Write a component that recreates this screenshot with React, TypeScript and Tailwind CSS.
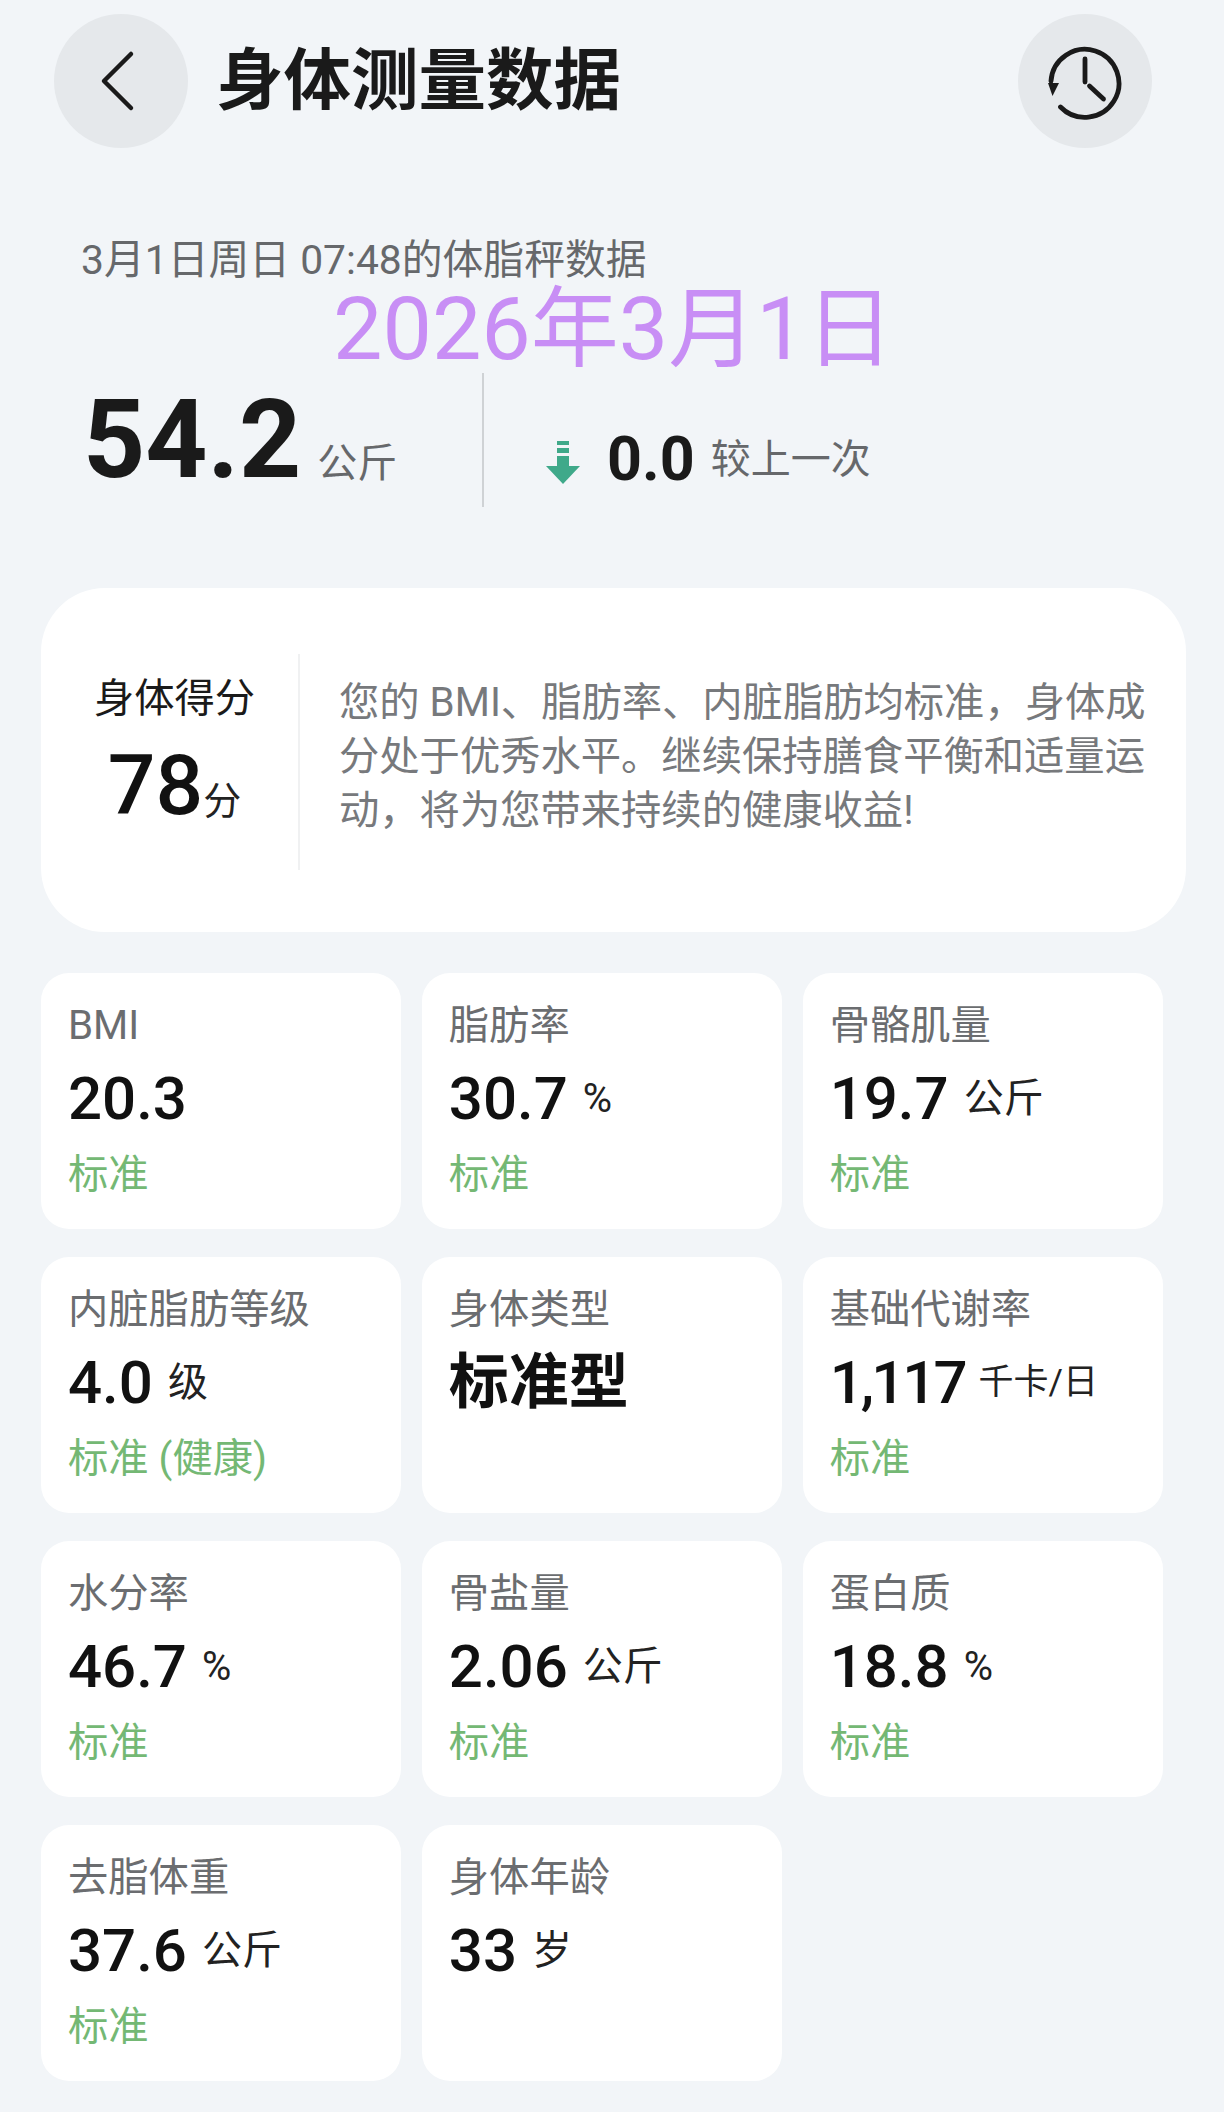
type Metric = {
  label: string;
  value: string;
  unit?: string;
  status?: string;
  big?: boolean;
};

const METRICS: Metric[] = [
  { label: 'BMI', value: '20.3', status: '标准' },
  { label: '脂肪率', value: '30.7', unit: '%', status: '标准' },
  { label: '骨骼肌量', value: '19.7', unit: '公斤', status: '标准' },
  { label: '内脏脂肪等级', value: '4.0', unit: '级', status: '标准 (健康)' },
  { label: '身体类型', value: '标准型', big: true },
  { label: '基础代谢率', value: '1,117', unit: '千卡/日', status: '标准' },
  { label: '水分率', value: '46.7', unit: '%', status: '标准' },
  { label: '骨盐量', value: '2.06', unit: '公斤', status: '标准' },
  { label: '蛋白质', value: '18.8', unit: '%', status: '标准' },
  { label: '去脂体重', value: '37.6', unit: '公斤', status: '标准' },
  { label: '身体年龄', value: '33', unit: '岁' },
];

function MetricCard({ label, value, unit, status, big }: Metric) {
  return (
    <div className="h-[256px] rounded-[28px] bg-white pl-[27px] pt-[28px]">
      <div className="h-[50px] text-[40.3px] leading-[50px] text-[#6b6d70]">{label}</div>
      <div className="mt-[10px] flex h-[76px] items-center">
        <span
          className={
            big
              ? 'text-[60px] font-bold text-[#111]'
              : value === '1,117'
                ? 'text-[60px] font-medium tracking-[-3px] text-[#111]'
                : 'text-[60px] font-medium text-[#111]'
          }
        >
          {value}
        </span>
        {unit && (
          <span className={unit === '千卡/日' ? 'ml-[14px] text-[35px] text-[#222]' : 'ml-[15px] text-[40px] text-[#222]'}>{unit}</span>
        )}
      </div>
      {status && <div className="mt-[13px] text-[40.3px] leading-[50px] text-[#74b874]">{status}</div>}
    </div>
  );
}

export default function App() {
  return (
    <div className="relative h-[2112px] w-[1224px] overflow-hidden bg-[#f2f5f8] font-['Roboto','Noto_Sans_CJK_SC',sans-serif]">
      {/* header */}
      <div className="mt-[14px] flex h-[134px] items-center pl-[54px] pr-[72px]">
        <button className="flex h-[134px] w-[134px] items-center justify-center rounded-full bg-[#e5e8eb]">
          <svg width="36" height="62" viewBox="0 0 36 62" fill="none" stroke="#1a1a1a" strokeWidth="4.5" strokeLinecap="round" strokeLinejoin="round" className="mr-[8px]">
            <path d="M32 4 L5 31 L32 58" />
          </svg>
        </button>
        <h1 className="ml-[28px] text-[67.5px] font-bold text-[#1a1a1a]">身体测量数据</h1>
        <button className="ml-auto flex h-[134px] w-[134px] items-center justify-center rounded-full bg-[#e5e8eb]">
          <svg width="80" height="80" viewBox="0 0 80 80" fill="none" stroke="#1a1a1a" strokeWidth="4.8" strokeLinecap="round">
            <path d="M6 40 A 34 34 0 1 1 15.5 66" />
            <path d="M40 18 V 41" />
            <path d="M44.5 45 L 58.5 58" />
            <path d="M3 42 L 14 42 L 7.5 55 Z" fill="#1a1a1a" stroke="none" />
          </svg>
        </button>
      </div>

      {/* weight summary */}
      <div className="ml-[81px] mt-[87px] text-[40.8px] leading-[50px] text-[#66686b]">3月1日周日 07:48的体脂秤数据</div>
      <div className="ml-[83px] mt-[88px] flex h-[134px] items-center">
        <div className="flex w-[399px] items-baseline">
          <span className="text-[108.5px] leading-[120px] font-bold text-[#1a1a1a]">54.2</span>
          <span className="ml-[16px] text-[40px] text-[#66686b]">公斤</span>
        </div>
        <div className="h-[134px] w-[2px] bg-[#cfd2d5]" />
        <svg width="34" height="44" viewBox="0 0 34 44" className="ml-[62px] mt-[46px]" fill="#3fa98a">
          <rect x="11" y="0" width="12" height="4" />
          <rect x="11" y="7" width="12" height="5" />
          <rect x="11" y="15" width="12" height="12" />
          <path d="M0 25 H34 L17 43 Z" />
        </svg>
        <span className="ml-[27px] mt-[40px] text-[61px] font-bold text-[#1a1a1a]">0.0</span>
        <span className="ml-[16px] mt-[40px] text-[40px] text-[#66686b]">较上一次</span>
      </div>

      {/* score card */}
      <div className="ml-[41px] mt-[81px] flex h-[344px] w-[1145px] rounded-[64px] bg-white">
        <div className="my-[66px] flex h-[216px] w-[259px] shrink-0 flex-col items-center border-r-2 border-[#f0f1f2] pl-[10px]">
          <div className="mt-[17px] text-[40.3px] leading-[56px] text-[#1a1a1a]">身体得分</div>
          <div className="mt-[9px] flex items-baseline">
            <span className="text-[84px] leading-[100px] font-medium text-[#111]">78</span>
            <span className="text-[38px] text-[#222]">分</span>
          </div>
        </div>
        <p className="ml-[39px] mt-[88px] w-[818px] text-[40.3px] leading-[54px] text-[#77797c]">
          您的 BMI、脂肪率、内脏脂肪均标准，身体成分处于优秀水平。继续保持膳食平衡和适量运动，将为您带来持续的健康收益!
        </p>
      </div>

      {/* metrics */}
      <div className="ml-[41px] mt-[41px] grid w-[1122px] grid-cols-3 gap-x-[20.5px] gap-y-[28px]">
        {METRICS.map((m) => (
          <MetricCard key={m.label} {...m} />
        ))}
      </div>

      <div className="absolute left-[333px] top-[275px] text-[88px] leading-[108px] whitespace-nowrap text-[#c88ef5]">2026年3月1日</div>
    </div>
  );
}
